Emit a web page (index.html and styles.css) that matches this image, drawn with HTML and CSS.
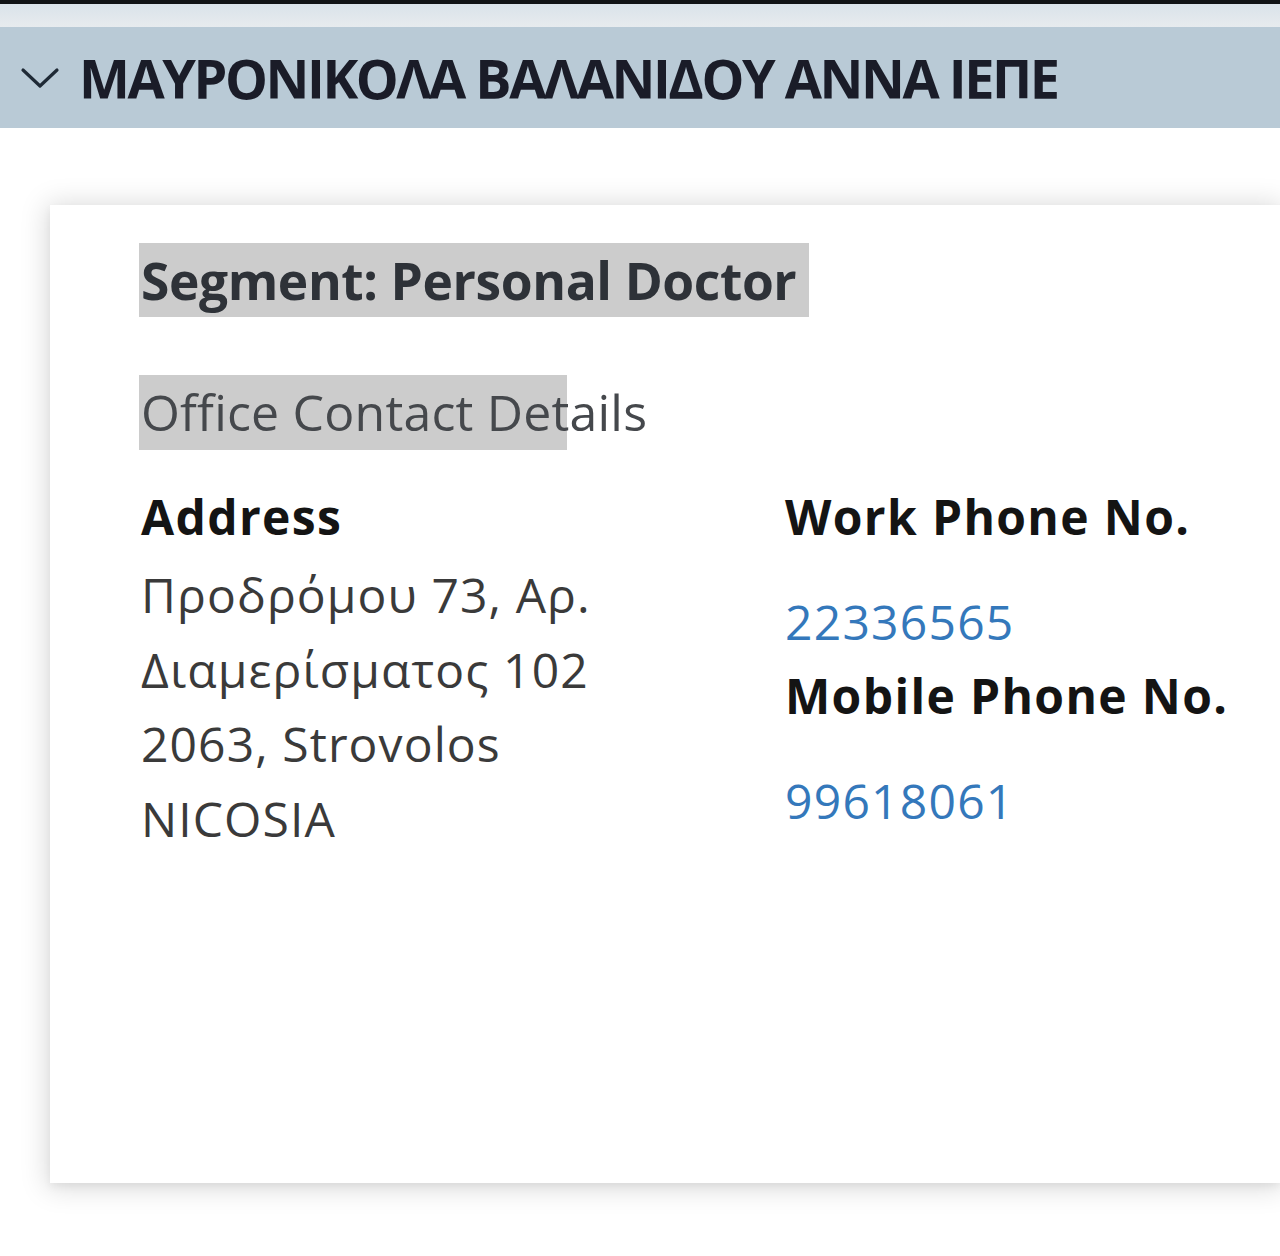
FILE: index.html
```html
<!DOCTYPE html>
<html lang="el">
<head>
<meta charset="utf-8">
<title>Personal Doctor</title>
<link rel="stylesheet" href="styles.css">
</head>
<body>
<div class="topstrip"></div>
<header class="header">
  <svg class="chevron" width="40" height="24" viewBox="0 0 40 24" aria-hidden="true">
    <path d="M3 4 L20 20 L37 4" fill="none" stroke="#1f2a36" stroke-width="3.2" stroke-linecap="round" stroke-linejoin="round"/>
  </svg>
  <h1 class="title">ΜΑΥΡΟΝΙΚΟΛΑ ΒΑΛΑΝΙΔΟΥ ΑΝΝΑ ΙΕΠΕ</h1>
</header>
<main class="content">
  <section class="card">
    <div class="segment">Segment: Personal Doctor</div>
    <div class="section-title">Office Contact Details</div>
    <div class="columns">
      <div class="col">
        <div class="label">Address</div>
        <div class="address">
          <div>Προδρόμου 73, Αρ.</div>
          <div>Διαμερίσματος 102</div>
          <div>2063, Strovolos</div>
          <div>NICOSIA</div>
        </div>
      </div>
      <div class="col">
        <div class="label">Work Phone No.</div>
        <a class="phone" href="#">22336565</a>
        <div class="label">Mobile Phone No.</div>
        <a class="phone" href="#">99618061</a>
      </div>
    </div>
  </section>
</main>
</body>
</html>
```
FILE: styles.css
```css
* { box-sizing: border-box; }
html, body {
  margin: 0;
  padding: 0;
  background: #ffffff;
  font-family: "Open Sans", "Noto Sans", sans-serif;
}
.topstrip {
  height: 27px;
  border-top: 4px solid #111316;
  background: linear-gradient(#dae3ea, #e7ebee);
}
.header {
  height: 101px;
  background: #b9cad6;
  display: flex;
  align-items: center;
  padding-left: 20px;
  gap: 19px;
}
.chevron { display: block; flex: none; }
.title {
  margin: 0;
  font-size: 54px;
  font-weight: 700;
  color: #1a1c28;
  line-height: 1;
  white-space: nowrap;
  letter-spacing: -2.45px;
}
.content {
  padding: 77px 0 73px 50px;
}
.card {
  height: 978px;
  background: #ffffff;
  box-shadow: 0 2px 26px 3px rgba(0, 0, 0, 0.15), 0 4px 8px rgba(0, 0, 0, 0.05);
  padding: 38px 0 0 89px;
}
.segment {
  display: inline-block;
  background: #cccccc;
  font-size: 51.5px;
  font-weight: 700;
  color: #2e3238;
  line-height: 74px;
  padding: 0 13px 0 2px;
  letter-spacing: -0.4px;
}
.section-title {
  margin-top: 58px;
  font-size: 50px;
  line-height: 75px;
  color: #45484c;
  background: linear-gradient(#cccccc, #cccccc) no-repeat;
  background-size: 428px 100%;
  padding-left: 2px;
  letter-spacing: 0.2px;
}
.columns {
  display: grid;
  grid-template-columns: 644px 1fr;
  margin-top: 30px;
}
.col { display: flex; flex-direction: column; align-items: flex-start; }
.label {
  font-size: 48px;
  font-weight: 700;
  line-height: 74px;
  color: #141414;
  padding-left: 2px;
  letter-spacing: 1.35px;
}
.address {
  margin-top: 4px;
  font-size: 48px;
  line-height: 74.5px;
  color: #3a3a3a;
  padding-left: 2px;
  letter-spacing: 1.1px;
}
.phone {
  margin-top: 31px;
  font-size: 48px;
  line-height: 74px;
  color: #3478bb;
  text-decoration: none;
  padding-left: 2px;
  letter-spacing: 1.25px;
}
```
